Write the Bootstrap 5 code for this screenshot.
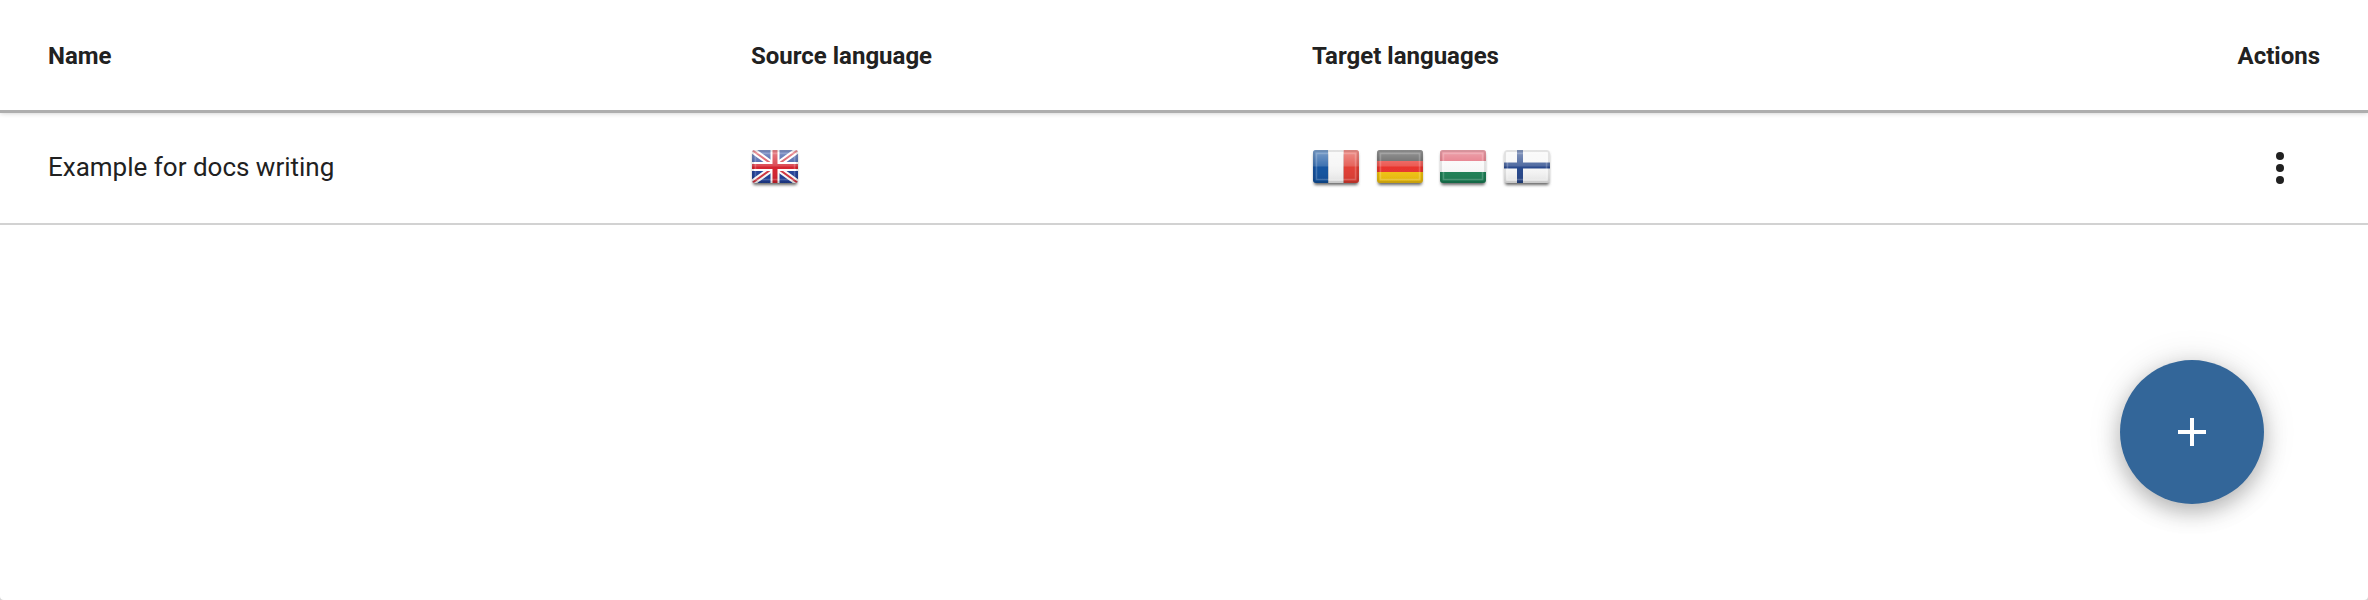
<!DOCTYPE html>
<html lang="en">
<head>
  <meta charset="UTF-8" />
  <meta name="viewport" content="width=device-width, initial-scale=1.0"/>
  <title>Projects</title>
  <link href="https://cdn.jsdelivr.net/npm/bootstrap@5.3.2/dist/css/bootstrap.min.css" rel="stylesheet">
  <style>
    html, body { height: 100%; }
    body { background: #d4d4d4; font-family: Roboto, "Liberation Sans", sans-serif; color: #212121; overflow: hidden; }
    .page { height: 600px; background: #fff; border-radius: 0 0 4px 4px; position: relative; }
    .projects { table-layout: fixed; width: 100%; margin: 0; color: #212121; }
    .projects th, .projects td { padding: 0; vertical-align: middle; background: transparent; color: #212121; }
    .projects th { height: 111px; padding-top: 2px; font-size: 24px; font-weight: 700; }
    .projects td { height: 113px; font-size: 26px; font-weight: 400; }
    .projects thead tr { border-bottom: 3px solid #aeaeae; box-shadow: 0 2px 5px rgba(0,0,0,.22); }
    .projects tbody tr { border-bottom: 2px solid #d2d2d2; }
    .col-name { width: 751px; padding-left: 48px !important; }
    .col-source { width: 561px; }
    .col-actions { width: 208px; padding-right: 48px !important; }
    .flag { width: 46px; height: 36px; display: block; flex: none; overflow: visible; }
    .flag-row { gap: 17.7px; margin-left: 1px; }
    .more { display: block; width: 10px; height: 34px; border: 0; background: none; padding: 0; margin-left: 115px; }
    .more svg { display: block; }
    .fab { position: absolute; left: 2120px; top: 360px; width: 144px; height: 144px; border: 0; background: #336699; box-shadow: 0 8px 22px rgba(0,0,0,.26), 0 0 36px rgba(0,0,0,.1); }
    .fab svg { display: block; margin: 0 auto; }
  </style>
</head>
<body>
  <svg width="0" height="0" class="position-absolute">
    <defs>
      <linearGradient id="gloss" x1="0" y1="0" x2="0" y2="1">
        <stop offset="0" stop-color="#fff" stop-opacity=".45"/>
        <stop offset=".48" stop-color="#fff" stop-opacity=".2"/>
        <stop offset=".52" stop-color="#fff" stop-opacity=".02"/>
        <stop offset="1" stop-color="#000" stop-opacity=".1"/>
      </linearGradient>
      <filter id="soft" x="-10%" y="-10%" width="120%" height="130%">
        <feGaussianBlur stdDeviation=".75"/>
      </filter>
      <filter id="drop" x="-15%" y="-15%" width="130%" height="140%">
        <feGaussianBlur stdDeviation="1.500"/>
      </filter>
      <clipPath id="round"><rect width="46" height="33" rx="3"/></clipPath>
      <g id="bevel">
        <rect width="46" height="33" fill="url(#gloss)"/>
        <rect x="1" y="1" width="44" height="31" rx="2" fill="none" stroke="#000" stroke-opacity=".09" stroke-width="2"/>
        <rect x="3.500" y="3.500" width="39" height="26" fill="none" stroke="#fff" stroke-opacity=".2" stroke-width="1.500"/>
      </g>
    </defs>
  </svg>

  <div class="page">
    <table class="table projects">
      <thead>
        <tr>
          <th class="col-name">Name</th>
          <th class="col-source">Source language</th>
          <th>Target languages</th>
          <th class="col-actions text-end">Actions</th>
        </tr>
      </thead>
      <tbody>
        <tr>
          <td class="col-name">Example for docs writing</td>
          <td class="col-source">
            <div class="d-flex flag-row">
              <svg class="flag" viewBox="0 0 46 36" role="img" aria-label="English">
                <rect x="1" y="3" width="44" height="32" rx="2" fill="#666" filter="url(#drop)"/>
                <g filter="url(#soft)"><g clip-path="url(#round)">
                  <rect width="46" height="33" fill="#1f3f98"/>
                  <path d="M0 0L46 33M46 0L0 33" stroke="#fff" stroke-width="6"/>
                  <path d="M0 0L46 33M46 0L0 33" stroke="#d3343f" stroke-width="2"/>
                  <path d="M23 0V33M0 16.500H46" stroke="#fff" stroke-width="9"/>
                  <path d="M23 0V33M0 16.500H46" stroke="#d3202c" stroke-width="5"/>
                  <use href="#bevel"/>
                </g></g>
              </svg>
            </div>
          </td>
          <td>
            <div class="d-flex flag-row">
              <svg class="flag" viewBox="0 0 46 36" role="img" aria-label="French">
                <rect x="1" y="3" width="44" height="32" rx="2" fill="#666" filter="url(#drop)"/>
                <g filter="url(#soft)"><g clip-path="url(#round)">
                  <rect width="15.300" height="33" fill="#10509e"/>
                  <rect x="15.300" width="15.400" height="33" fill="#f4f4f4"/>
                  <rect x="30.700" width="15.300" height="33" fill="#e03c32"/>
                  <use href="#bevel"/>
                </g></g>
              </svg>
              <svg class="flag" viewBox="0 0 46 36" role="img" aria-label="German">
                <rect x="1" y="3" width="44" height="32" rx="2" fill="#666" filter="url(#drop)"/>
                <g filter="url(#soft)"><g clip-path="url(#round)">
                  <rect width="46" height="11" fill="#444"/>
                  <rect y="11" width="46" height="11" fill="#e8312a"/>
                  <rect y="22" width="46" height="11" fill="#f2c20c"/>
                  <use href="#bevel"/>
                </g></g>
              </svg>
              <svg class="flag" viewBox="0 0 46 36" role="img" aria-label="Hungarian">
                <rect x="1" y="3" width="44" height="32" rx="2" fill="#666" filter="url(#drop)"/>
                <g filter="url(#soft)"><g clip-path="url(#round)">
                  <rect width="46" height="11" fill="#df5b6c"/>
                  <rect y="11" width="46" height="11" fill="#f8f8f8"/>
                  <rect y="22" width="46" height="11" fill="#1c7f55"/>
                  <use href="#bevel"/>
                </g></g>
              </svg>
              <svg class="flag" viewBox="0 0 46 36" role="img" aria-label="Finnish">
                <rect x="1" y="3" width="44" height="32" rx="2" fill="#666" filter="url(#drop)"/>
                <g filter="url(#soft)"><g clip-path="url(#round)">
                  <rect width="46" height="33" fill="#f6f6f6"/>
                  <path d="M16 0V33M0 15.500H46" stroke="#26468a" stroke-width="6"/>
                  <use href="#bevel"/>
                </g></g>
              </svg>
            </div>
          </td>
          <td class="col-actions">
            <button class="more" type="button" aria-label="Actions">
              <svg width="10" height="34" viewBox="0 0 10 34" fill="#212121">
                <circle cx="5" cy="5" r="4"/>
                <circle cx="5" cy="17" r="4"/>
                <circle cx="5" cy="29" r="4"/>
              </svg>
            </button>
          </td>
        </tr>
      </tbody>
    </table>

    <button class="fab btn rounded-circle p-0" type="button" aria-label="Add">
      <svg width="30" height="30" viewBox="0 0 30 30" fill="#fff">
        <path d="M13 1h4v12h12v4H17v12h-4V17H1v-4h12z"/>
      </svg>
    </button>
  </div>

  <script src="https://cdn.jsdelivr.net/npm/bootstrap@5.3.2/dist/js/bootstrap.bundle.min.js"></script>
</body>
</html>
